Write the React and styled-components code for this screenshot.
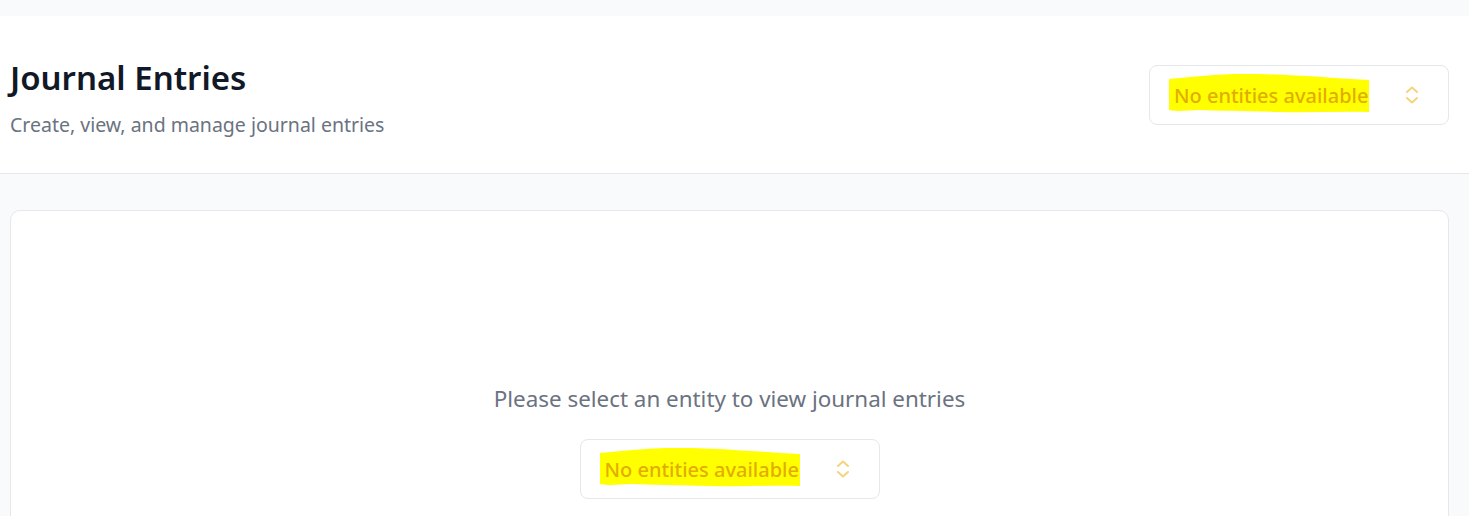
import React from "react";
import styled, { createGlobalStyle } from "styled-components";

const Global = createGlobalStyle`
  html, body { margin: 0; padding: 0; background: #f9fafb; }
  body { font-family: "Noto Sans", "Open Sans", sans-serif; -webkit-font-smoothing: antialiased; }
  * { box-sizing: border-box; }
`;

const Page = styled.div`
  padding-top: 16px;
  min-height: 516px;
  background: #f9fafb;
`;

const Header = styled.header`
  background: #ffffff;
  border-bottom: 1px solid #e5e7eb;
  height: 158px;
  padding: 0 20px 0 10px;
  display: flex;
  align-items: center;
  justify-content: space-between;
`;

const TitleBlock = styled.div`
  display: flex;
  flex-direction: column;
  gap: 13px;
  margin-top: 7px;
`;

const Title = styled.h1`
  margin: 0;
  font-size: 33px;
  line-height: 40px;
  font-weight: 600;
  color: #111827;
`;

const Subtitle = styled.p`
  margin: 0;
  font-size: 19.5px;
  line-height: 28px;
  color: #6b7280;
`;

const Main = styled.main`
  padding: 36px 20px 0 10px;
`;

const Card = styled.section`
  background: #ffffff;
  border: 1px solid #e5e7eb;
  border-radius: 10px;
  height: 400px;
  padding-top: 172px;
  display: flex;
  flex-direction: column;
  align-items: center;
  gap: 24px;
`;

const Message = styled.p`
  margin: 0;
  font-size: 22.4px;
  line-height: 32px;
  color: #6b7280;
`;

const SelectBox = styled.button`
  width: 300px;
  height: 60px;
  background: #ffffff;
  border: 1px solid #e5e7eb;
  border-radius: 8px;
  padding: 0 28px 0 24px;
  display: flex;
  align-items: center;
  justify-content: space-between;
  font-family: inherit;
  cursor: pointer;
`;

const Label = styled.span`
  position: relative;
  display: inline-block;
  font-size: 20px;
  line-height: 28px;
  font-weight: 500;
  color: #e2ad00;
  z-index: 0;
  white-space: nowrap;
  margin-top: 2px;
`;

const Highlight = styled.svg`
  position: absolute;
  left: -5px;
  top: -8px;
  width: 200px;
  height: 40px;
  z-index: -1;
`;

const Chevron = styled.svg`
  width: 16px;
  height: 20px;
  color: #f3d47c;
`;

function Select() {
  return (
    <SelectBox type="button">
      <Label>
        <Highlight viewBox="0 0 200 40" preserveAspectRatio="none">
          <path
            d="M0 5 C 30 2, 60 -1, 90 0 C 130 1, 160 4, 200 6 L 200 38 C 170 37, 140 39, 110 38 C 80 37, 50 37, 30 36 C 20 36, 10 38, 0 36 Z"
            fill="#ffff00"
          />
        </Highlight>
        No entities available
      </Label>
      <Chevron viewBox="0 0 16 20" fill="none" stroke="currentColor" strokeWidth="2" strokeLinecap="round" strokeLinejoin="round">
        <path d="M3 7 L8 2.5 L13 7" />
        <path d="M3 13 L8 17.5 L13 13" />
      </Chevron>
    </SelectBox>
  );
}

export default function App() {
  return (
    <>
      <Global />
      <Page>
        <Header>
          <TitleBlock>
            <Title>Journal Entries</Title>
            <Subtitle>Create, view, and manage journal entries</Subtitle>
          </TitleBlock>
          <Select />
        </Header>
        <Main>
          <Card>
            <Message>Please select an entity to view journal entries</Message>
            <Select />
          </Card>
        </Main>
      </Page>
    </>
  );
}
